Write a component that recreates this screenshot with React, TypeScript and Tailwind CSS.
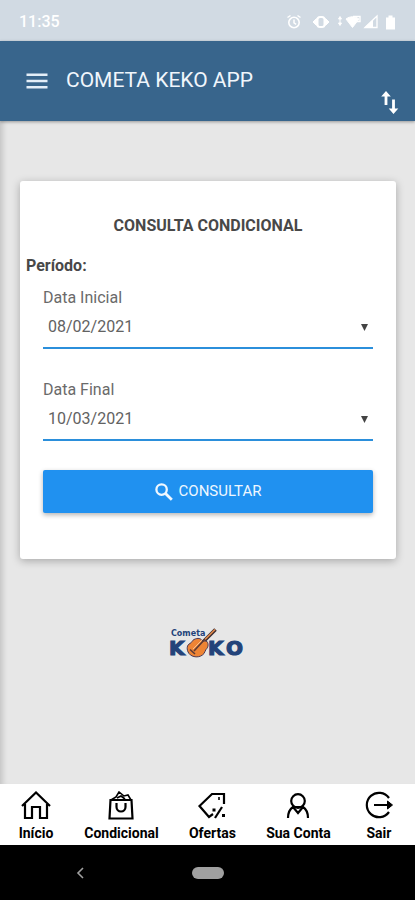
import type { ReactNode } from "react";

function StatusBar() {
  return (
    <div className="flex h-[41px] items-center justify-between bg-[#d1dae3] pt-0.5 pr-[17px] pl-[19px] text-white">
      <span className="text-base font-medium">11:35</span>
      <svg width="112" height="18" viewBox="0 0 112 18" fill="none" stroke="currentColor" aria-hidden="true">
        <circle cx="8" cy="9.500" r="5.200" strokeWidth="1.600" />
        <path d="M8 6.500v3.400l2.200 1.400M1.500 4.500L4.500 2.500M14.500 4.500L11.500 2.500" strokeWidth="1.500" />
        <path d="M27 9l3.500-3.500v7zM43 9l-3.500-3.500v7z" fill="currentColor" strokeWidth="1" />
        <rect x="31.500" y="4" width="7" height="10" rx="2.500" strokeWidth="2" />
        <path d="M54 3.500l1.500 2.500h-3zM54 12.500l1.500-2.500h-3zM54 6v5" fill="currentColor" strokeWidth="1" />
        <path d="M60 6c4-3 9-3 13 0l-6.500 8.500z" fill="currentColor" />
        <path d="M67 3.500h7v5h-3" strokeWidth="1.400" />
        <path d="M79 14.500L91 3v11.500z" strokeWidth="1.300" />
        <path d="M79 14.500l7.500-7v7z" fill="currentColor" />
        <path d="M100 4.500h2.500v-2h4v2h2.500v12h-9z" fill="currentColor" stroke="none" />
      </svg>
    </div>
  );
}

function Header() {
  return (
    <header className="relative z-10 flex h-20 justify-between bg-[#38658c] pr-4 pl-[26px] text-white shadow-[0_1px_3px_rgba(0,0,0,0.35)]">
      <div className="flex items-center gap-[18px]">
        <button type="button" aria-label="Menu" className="text-[#e3eef8]">
          <svg width="22" height="16" viewBox="0 0 22 16" fill="currentColor">
            <path d="M0.500 0.500h21v2.600h-21zM0.500 6.700h21v2.600h-21zM0.500 12.900h21v2.600h-21z" />
          </svg>
        </button>
        <h1 className="text-[21px] text-[#f0f6fc]">COMETA KEKO APP</h1>
      </div>
      <button type="button" aria-label="Sincronizar" className="self-end pb-1.5">
        <svg width="18" height="24" viewBox="0 0 18 24" fill="currentColor">
          <path d="M5 0l4.800 5.600H6.400V14H3.600V5.600H0.200zM12.500 23l4.800-5.600H13.900V8.500h-2.800v8.900H7.700z" />
        </svg>
      </button>
    </header>
  );
}

function DateField({ id, label, options }: { id: string; label: string; options: string[] }) {
  return (
    <div>
      <label htmlFor={id} className="block text-base leading-6 text-[#6a6a6a]">
        {label}
      </label>
      <div className="relative">
        <select
          id={id}
          className="h-[39px] w-full appearance-none border-b-2 border-[#2b8fdb] bg-transparent pb-[3px] pl-[5px] text-base text-[#626262] outline-none"
        >
          {options.map((option) => (
            <option key={option}>{option}</option>
          ))}
        </select>
        <svg className="pointer-events-none absolute top-3.5 right-[5px]" width="7" height="7" viewBox="0 0 7 7" fill="#444" aria-hidden="true">
          <path d="M0 0h7L3.500 7z" />
        </svg>
      </div>
    </div>
  );
}

function CometaLogo() {
  return (
    <svg width="78" height="34" viewBox="0 0 78 34" role="img" aria-label="Cometa Keko">
      <g fill="#23437a" fontFamily="'DejaVu Sans', sans-serif" fontWeight="700">
        <text x="2" y="10" fontSize="8">Cometa</text>
        <g fontSize="20" stroke="#23437a" strokeWidth="1.200">
          <text x="0" y="29">K</text>
          <text x="39" y="29">K</text>
          <text x="57" y="29">O</text>
        </g>
      </g>
      <path d="M29 21L46.500 3.500" stroke="#3b2a2e" strokeWidth="3.600" />
      <path d="M29 20.500L46 3.500" stroke="#e58a4b" strokeWidth="1.600" />
      <path
        d="M25 13.500c4-2 7-1 8 1 1 1 3 0 5 1 2 3 1 6-1 8-1 1-1 3-2 4-4 5-12 4-15 0-3-4-2-9 1-10 2-1 2-3 4-4z"
        fill="#ee8434"
        stroke="#4a3a55"
        strokeWidth="1"
      />
      <path d="M21 23.500l5 4.500M25 25l11-12" stroke="#5b3a35" strokeWidth="1.600" />
      <path d="M24 23l9-9" stroke="#fbd0a5" strokeWidth="0.800" />
    </svg>
  );
}

function Card() {
  return (
    <section className="mr-[19px] ml-5 mt-[60px] rounded-[3px] bg-white px-1.5 pt-[33px] pb-[46px] shadow-[0_2px_8px_rgba(0,0,0,0.28)]">
      <h2 className="text-center text-base leading-6 font-bold text-[#484848]">CONSULTA CONDICIONAL</h2>
      <p className="mt-4 text-base leading-6 font-bold text-[#484848]">Período:</p>
      <form className="flex flex-col px-[17px] pt-2" onSubmit={(event) => event.preventDefault()}>
        <div className="flex flex-col gap-[29px]">
          <DateField id="inicial" label="Data Inicial" options={["08/02/2021"]} />
          <DateField id="final" label="Data Final" options={["10/03/2021"]} />
        </div>
        <button
          type="submit"
          className="mt-[29px] flex h-[43px] items-center justify-center gap-1.5 rounded-[2px] bg-[#2091f0] text-[15px] text-[#eef7ff] shadow-[0_2px_5px_rgba(0,0,0,0.3)]"
        >
          <svg width="18" height="18" viewBox="0 0 18 18" fill="none" stroke="currentColor" strokeWidth="2.300" aria-hidden="true">
            <circle cx="6.600" cy="6.600" r="5.200" />
            <path d="M10.500 10.500l6.300 6.300" strokeWidth="2.800" />
          </svg>
          CONSULTAR
        </button>
      </form>
    </section>
  );
}

const tabs: { label: string; icon: ReactNode }[] = [
  { label: "Início", icon: <path d="M1 15L15 1.500 29 15M4 13v14h7V16h8v11h7V13" /> },
  {
    label: "Condicional",
    icon: (
      <>
        <path d="M4.500 9h21l1 18.500h-23z" />
        <path d="M5 9l5-3 3-5 5 4 4-1 3 5M11 7l4-2 4 3" strokeWidth="1.600" />
        <path d="M10.500 12v4a4.500 4.500 0 0 0 9 0v-4" />
      </>
    ),
  },
  {
    label: "Ofertas",
    icon: (
      <>
        <path d="M27 13V3H15L2.500 15l9.500 11 4-3" />
        <path d="M22 6v3" strokeWidth="1.600" />
        <path d="M18 27l7-11" />
        <path d="M17 17.500v3M26.500 23v3" strokeWidth="3" />
      </>
    ),
  },
  {
    label: "Sua Conta",
    icon: (
      <>
        <circle cx="15" cy="10" r="6.800" />
        <path d="M5 27c0-6 2-9 5-11l5 6 5-6c3 2 5 5 5 11M10 16h10" />
      </>
    ),
  },
  {
    label: "Sair",
    icon: (
      <>
        <path d="M25 7A12.200 12.200 0 1 0 25 21M10 14h15" />
        <path d="M23.500 10l5 4-5 4z" fill="currentColor" strokeWidth="1" />
      </>
    ),
  },
];

function TabBar() {
  return (
    <nav className="flex h-[61px] justify-between bg-white px-[18px] pt-[7px] text-black">
      {tabs.map((tab) => (
        <a key={tab.label} href="#" className="flex min-w-9 flex-col items-center gap-[5px]">
          <svg width="30" height="29" viewBox="0 0 30 29" fill="none" stroke="currentColor" strokeWidth="2.200" aria-hidden="true">
            {tab.icon}
          </svg>
          <span className="text-sm leading-4 font-bold">{tab.label}</span>
        </a>
      ))}
    </nav>
  );
}

function SystemBar() {
  return (
    <div className="grid h-[55px] grid-cols-[1fr_auto_1fr] items-center bg-black">
      <button type="button" aria-label="Voltar" className="ml-[76px] justify-self-start text-[#a0a0a0]">
        <svg width="8" height="12" viewBox="0 0 8 12" fill="none" stroke="currentColor" strokeWidth="1.600">
          <path d="M7 1L2 6l5 5" />
        </svg>
      </button>
      <button type="button" aria-label="Tela inicial" className="h-3 w-8 rounded-full bg-[#a0a0a0]" />
    </div>
  );
}

export default function App() {
  return (
    <div className="flex min-h-screen flex-col font-[Roboto,sans-serif]">
      <StatusBar />
      <Header />
      <main className="flex flex-1 flex-col items-stretch bg-[#e7e7e7] shadow-[inset_7px_0_6px_-5px_rgba(0,0,0,0.18)]">
        <Card />
        <div className="mt-[67px] flex justify-center">
          <CometaLogo />
        </div>
      </main>
      <TabBar />
      <SystemBar />
    </div>
  );
}
